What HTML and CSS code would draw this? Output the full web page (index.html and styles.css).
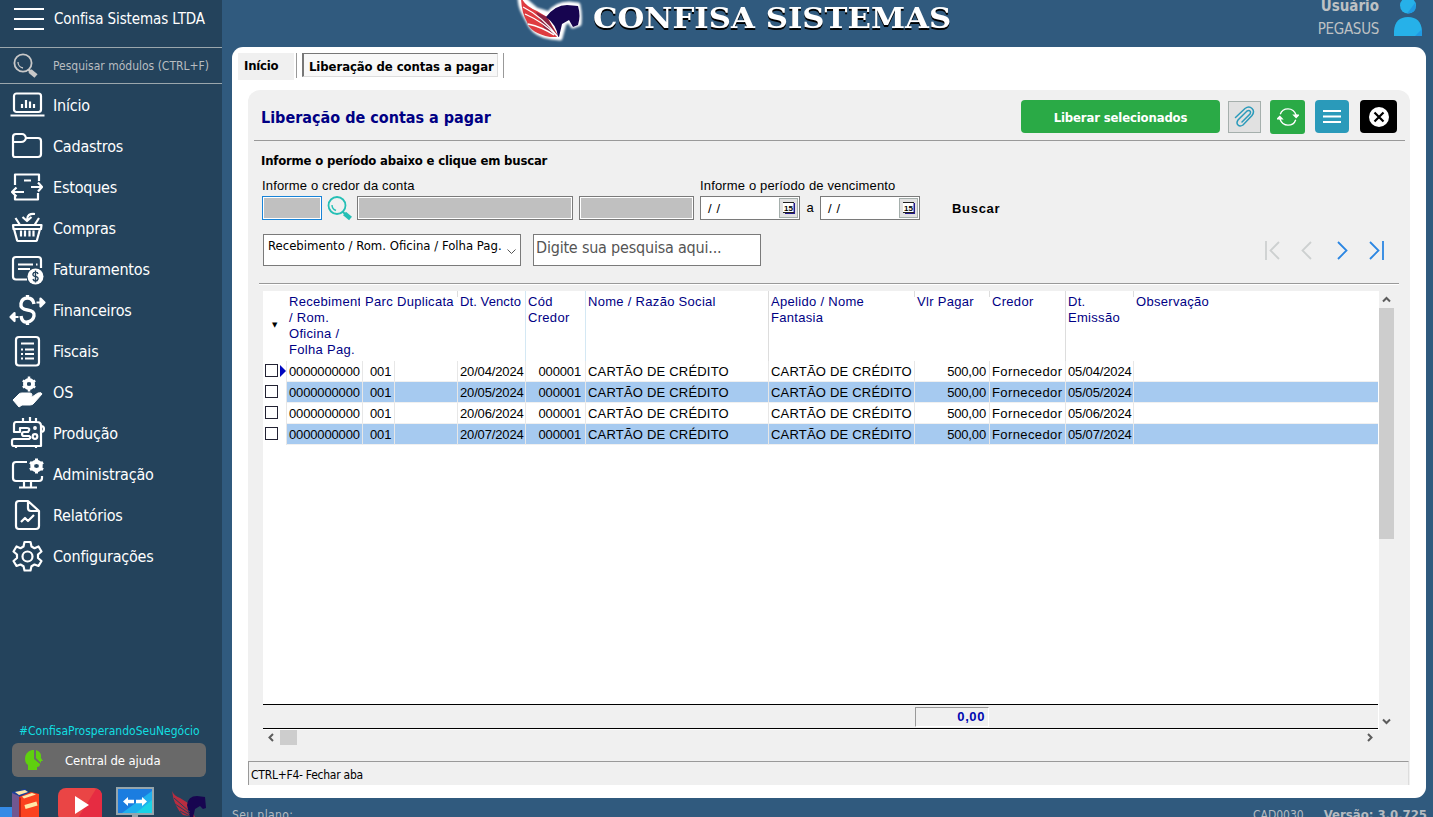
FILE: index.html
```html
<!DOCTYPE html>
<html lang="pt-BR">
<head>
<meta charset="utf-8">
<title>Confisa Sistemas</title>
<link rel="stylesheet" href="styles.css">
</head>
<body>
<div class="app">
  <aside class="sidebar">
    <div class="company">
      <svg class="burger" width="30" height="24" viewBox="0 0 30 24" stroke="#fff" stroke-width="2"><path d="M0 2h30M0 12h30M0 22h30"/></svg>
      <span>Confisa Sistemas LTDA</span>
    </div>
    <div class="search">
      <svg width="26" height="26" viewBox="0 0 26 26" fill="none" stroke="#c8c8c8"><circle cx="10" cy="10" r="8.600" stroke-width="1.800"/><path d="M5 9a6 6 0 0 0 5 6" stroke-width="1.300"/><path d="M15.500 16.500l2 2" stroke-width="2.500"/><path d="M17 18l6 5" stroke-width="4.800"/></svg>
      <span>Pesquisar módulos (CTRL+F)</span>
    </div>
    <nav class="menu">
      <a class="item"><svg viewBox="0 0 34 34"><rect x="4" y="5.500" width="27" height="18.500" rx="2.500"/><path d="M0.500 27.500h34" /><path d="M12 20v-4M16 20v-8M20 20v-6.500M24 20v-4"/></svg><span>Início</span></a>
      <a class="item"><svg viewBox="0 0 34 34"><path d="M3 26V8q0-3 3-3h6q3 0 4 4h12q3 0 3 3v13q0 3-3 3H5q-2 0-2-2zM3 13h8q4 0 5-4"/></svg><span>Cadastros</span></a>
      <a class="item"><svg viewBox="0 0 34 34"><path d="M5 15V4.500h24V11M5 25v4.500h23V23M14 10.500h7M21 17h11M28 12.500l4 4.500-4 4.500M14 22H2M6.500 17.500L2 22l4.500 4.500"/></svg><span>Estoques</span></a>
      <a class="item"><svg viewBox="0 0 34 34"><path d="M3 14h28.500l-.5 4H3.500zM4 18l3 11q0 1 2 1h16q2 0 2-1l3-11M5.500 7l4.500 7M29 7l-4.500 7M11 19.500v6M15 19.500v6M19.500 19.500v6M23.500 19.500v6M25 3q-8-1-8 6M12.500 6l4.500 4 4.500-4"/></svg><span>Compras</span></a>
      <a class="item"><svg viewBox="0 0 34 34"><path d="M17 27.500H6q-3 0-3-3V8q0-3 3-3h22q3 0 3 3v8M8 12.500h15M26 12.500h1.500M8 17h12"/><circle cx="25.500" cy="24.500" r="8" fill="#fff" stroke="none"/><path class="cut" d="M28 22q-.5-2-2.500-2t-2.500 2 2.500 2.500T28 27t-2.500 2-2.500-2M25.500 18.500v12"/></svg><span>Faturamentos</span></a>
      <a class="item"><svg viewBox="0 0 34 34"><path class="heavy" d="M24 11q-1-6-6.500-6T11 10.500t6.500 6.500 6.500 6-6.500 6-6.500-6M17.500 2v3M17.500 29v3"/><path fill="#fff" d="M26.500 9.500H31M30.500 5.500l4 4-4 4zM8.500 24H4M4.500 20L.5 24l4 4z"/></svg><span>Financeiros</span></a>
      <a class="item"><svg viewBox="0 0 34 34"><rect x="6" y="3" width="23" height="28.500" rx="3"/><path d="M11 9.500h13M11 15.500h2M15 15.500h9M11 20h2M15 20h9M11 24.500h2M15 24.500h9"/></svg><span>Fiscais</span></a>
      <a class="item"><svg viewBox="0 0 34 34"><circle cx="19" cy="9" r="4" stroke-width="4"/><path d="M19 1.500v15M12.800 5.500l3 2M12.800 12.500l3-2M25.200 5.500l-3 2M25.200 12.500l-3-2" stroke-width="2.500"/><circle cx="19" cy="9" r="2" fill="#24435c" stroke="none"/><path fill="#fff" stroke-width="1" d="M3 25l6-6q1-1 3-1h8q2 0 2 2t-2 2h-5 7l6-4q4-1 4 1l-8 9q-1 2-4 2h-8l-3 2z"/></svg><span>OS</span></a>
      <a class="item"><svg viewBox="0 0 34 34"><path d="M6 6h21q4 0 4 4v20H4q-2 0-2-2v-3q0-2 2-2h15q3-1.500 0-3h-5q-2 0-2-2t2-2h4q3-4-1-4H10v4H4V9q0-3 2-3zM13 2v4M20 1v5M26 2v4M6 30v2M26 30v2M31 10q3 0 3 3t-3 3"/><circle cx="25" cy="12" r=".8"/><circle cx="25" cy="20.500" r="2.300"/></svg><span>Produção</span></a>
      <a class="item"><svg viewBox="0 0 34 34"><path d="M17 5H6q-3 0-3 3v13q0 3 3 3h23q3 0 3-3v-2M14 24v6M21 24v6M9 30.500h18"/><circle cx="26.500" cy="9" r="4.200" stroke-width="4"/><path d="M26.500 1.500v15M20 5.200l3 2M20 12.800l3-2M33 5.200l-3 2M33 12.800l-3-2" stroke-width="3"/><circle cx="26.500" cy="9" r="2" fill="#24435c" stroke="none"/></svg><span>Administração</span></a>
      <a class="item"><svg viewBox="0 0 34 34"><path d="M18 3H9Q6 3 6 6v22q0 3 3 3h17q3 0 3-3V13zM18 3v7q0 3 3 3h8M11 24l4-4 3 3 6-6"/></svg><span>Relatórios</span></a>
      <a class="item"><svg viewBox="0 0 34 34"><path d="M14.500 3h6l1 4.500 3 1.700 4-1.700 3 5-3.500 3v3.500l3.500 3-3 5-4-1.500-3 1.700-1 4.300h-6l-1-4.300-3-1.700-4 1.500-3-5 3.500-3v-3.500l-3.500-3 3-5 4 1.700 3-1.700z"/><circle cx="17.500" cy="17.500" r="5"/></svg><span>Configurações</span></a>
    </nav>
    <div class="hashtag">#ConfisaProsperandoSeuNegócio</div>
    <div class="help">
      <svg width="20" height="22" viewBox="0 0 20 22"><path fill="#5fd00f" d="M8 1Q1 3 1 10q0 4 3 6v5h9v-3q3 0 3-3l-6-5V1z"/><path fill="#5fd00f" d="M12 1q6 2 5 8l2 3h-2v2l-5-5z"/></svg>
      <span>Central de ajuda</span>
    </div>
    <div class="dock">
      <svg class="corner" width="14" height="11"><path fill="#358be6" d="M0 0h14v11H0z"/></svg>
      <svg class="books" width="28" height="29" viewBox="0 0 28 29"><path fill="#1c3f99" d="M0 4l13-3 4 3v25H0z"/><path fill="#ffe9a8" d="M3 4l10-2 3 2-9 3z"/><path fill="#715791" d="M0 5l7 3v21H0z"/><path fill="#fb421f" d="M7 9l12-5 8 2v23H7z"/><path fill="#ffe9a8" d="M10 8.500L20 5l4 1.500-12 4z"/><path fill="#b82618" d="M7 9l2 1v19H7z"/><path stroke="#ffe9a8" stroke-width="4" d="M13 19l12-3.500"/></svg>
      <svg class="video" width="44" height="30" viewBox="0 0 44 30"><rect width="44" height="34" rx="8" fill="#ea4545"/><path fill="#e62c42" d="M44 8v22H20L38 1q6 1 6 7z"/><path fill="#fff" d="M17 8v18l14-9z"/></svg>
      <svg class="remote" width="38" height="30" viewBox="0 0 38 30"><path fill="#95a5ac" d="M0 0h38v28H22v2h-6v-2H0z"/><path fill="#1b7de0" d="M2 2h34v24H2z"/><path fill="#1fb0ee" d="M36 4v22H6z"/><path fill="#19d3e6" d="M36 13v13H20z"/><path stroke="#fff" stroke-width="3.500" d="M11 14.500h7M20 14.500h7"/><path fill="#fff" d="M12 10v9l-5-4.500zM26 10v9l5-4.500z"/></svg>
      <svg class="pegasus" width="36" height="28" viewBox="0 0 36 28"><path fill="#b82d40" d="M0 0q2 5 8 7l8 5 7 14-12-2Q2 16 0 0z"/><path fill="#170550" d="M15 14q1-9 10-9l8 1 1 11-3 1-3-3-5 3-2 9h-3z"/><path fill="none" stroke="#24435c" d="M2 7l16 14M3 13l15 10M8 20l10 5"/></svg>
    </div>
  </aside>
  <main class="main">
    <header class="banner">
      <svg class="brand" width="76" height="46" viewBox="0 0 76 46"><defs><filter id="soft" x="-20%" y="-20%" width="140%" height="140%"><feGaussianBlur stdDeviation="1.300"/></filter></defs><path filter="url(#soft)" fill="#fff" stroke="#fff" stroke-width="5" stroke-linejoin="round" d="M6-4q0 10 4 17l7 13q6 9 20 11l9 1 4-15 5-3 4 6 6-2q1-10-1-19l-9-1q-13 0-20 10L22 10z"/><path fill="#df3b40" d="M7-4q2 9 16 15l10 6 12 20h-9Q16 33 13 22 7 12 7-4z"/><path fill="#8c2444" d="M22 12l11 5 11 20-14-9z"/><path fill="#170550" d="M32 17Q41 5 53 5l11 1q3 10 0 19l-5 2-4-7-7 4-3 13h-1q-1-12-12-20z"/><path fill="none" stroke="#fff" stroke-width="1.300" d="M9 7q20 10 35 30M11 14q18 8 31 21M14 24q14 3 26 11"/></svg>
      <h1>CONFISA SISTEMAS</h1>
      <div class="user"><b>Usuário</b><span>PEGASUS</span></div>
      <svg class="avatar" width="28" height="36" viewBox="0 0 28 36"><circle cx="14" cy="5.500" r="8" fill="#26b1e9"/><path fill="#209ae3" d="M21 3q3 10-8 10.500z"/><path fill="#26b1e9" d="M0 36v-5q1-14 14-14t14 14v5z"/><path fill="#209ae3" d="M28 29v7h-7z"/></svg>
    </header>
    <section class="window">
      <div class="tabs"><div class="tab home">Início</div><div class="tab current"><span>Liberação de contas a pagar</span></div></div>
      <div class="panel">
        <div class="titlebar">
          <h2>Liberação de contas a pagar</h2>
          <button class="release"><span>Liberar selecionados</span></button>
          <button class="attach"><svg width="22" height="24" viewBox="0 0 22 24" fill="none" stroke="#2a9aba" stroke-width="1.500"><path d="M1.500 12.500L11 3.500q4-3 7 0t0 7L9 20q-3 2-5 0t0-5l9-9q2-1 3 0t0 3l-8 8" stroke-linecap="round"/></svg></button>
          <button class="refresh"><svg width="22" height="20" viewBox="0 0 24 22" fill="none" stroke="#fff" stroke-width="1.500"><path d="M3.500 8q2-6 8.500-6t9 7M20.500 14q-2 6-8.500 6t-9-7"/><path fill="#fff" d="M18.500 9h5L21 11.500zM0.500 13L3 10.500 5.500 13z"/></svg></button>
          <button class="list"><svg width="18" height="13" viewBox="0 0 18 13" stroke="#fff" stroke-width="2"><path d="M0 1h18M0 6.500h18M0 12h18"/></svg></button>
          <button class="close"><svg width="20" height="20" viewBox="0 0 20 20"><circle cx="10" cy="10" r="10" fill="#fff"/><path stroke="#000" stroke-width="2.200" d="M5.500 5.500l9 9M14.500 5.500l-9 9"/></svg></button>
        </div>
        <h3>Informe o período abaixo e clique em buscar</h3>
        <div class="labels"><span class="l1">Informe o credor da conta</span><span class="l2">Informe o período de vencimento</span></div>
        <div class="fields">
          <div class="box code"></div>
          <svg class="find" width="25" height="25" viewBox="0 0 25 25" fill="none" stroke="#25bfb5"><circle cx="9.500" cy="9.500" r="8.500" stroke-width="1.800"/><path d="M4.500 9q0 4 4 5.500" stroke-width="1.400"/><path d="M15 15.500l3 3" stroke-width="2"/><path d="M17 17.500l6 5" stroke-width="4.500"/></svg>
          <div class="box name"></div>
          <div class="box doc"></div>
          <div class="date"><span>/ /</span><i><svg width="12" height="12" viewBox="0 0 12 12"><path fill="#221a8c" d="M2 1h10v11H2z"/><path fill="#fff" d="M0 0h10.500v11H0z"/><path stroke="#222" d="M0 .5h11M0 10.500h11"/><text x="1" y="8.500" class="day">15</text></svg></i></div>
          <span class="to">a</span>
          <div class="date"><span>/ /</span><i><svg width="12" height="12" viewBox="0 0 12 12"><path fill="#221a8c" d="M2 1h10v11H2z"/><path fill="#fff" d="M0 0h10.500v11H0z"/><path stroke="#222" d="M0 .5h11M0 10.500h11"/><text x="1" y="8.500" class="day">15</text></svg></i></div>
          <b class="go">Buscar</b>
        </div>
        <div class="filters">
          <div class="select"><span>Recebimento / Rom. Oficina / Folha Pag.</span><svg width="9" height="6" viewBox="0 0 9 6" fill="none" stroke="#555"><path d="M.5 .5l4 4 4-4"/></svg></div>
          <div class="query">Digite sua pesquisa aqui...</div>
          <svg class="pager" width="120" height="19" viewBox="0 0 120 19" fill="none" stroke-width="1.800"><path stroke="#cdd0d0" d="M1 0v19M14 1L5.500 9.500 14 18M46 1l-8.500 8.500L46 18"/><path stroke="#2b86e2" d="M73 1l8.500 8.500L73 18M105 1l8.500 8.500L105 18M118 0v19"/></svg>
        </div>
        <div class="rule"></div>
        <div class="gridwrap">
          <div class="grid">
            <div class="row head"><div class="mark">▼</div><div class="clip">Recebiment<br>/ Rom.<br>Oficina /<br>Folha Pag.</div><div>Parc</div><div class="tick">Duplicata</div><div class="cyan">Dt. Vencto</div><div class="cyan">Cód<br>Credor</div><div class="line">Nome / Razão Social</div><div class="tick">Apelido / Nome<br>Fantasia</div><div class="tick">Vlr Pagar</div><div class="line">Credor</div><div class="tick">Dt.<br>Emissão</div><div>Observação</div></div>
            <div class="row"><div class="check"><i></i><em></em></div><div class="num">0000000000</div><div class="num mid">001</div><div></div><div class="num">20/04/2024</div><div class="num right">000001</div><div class="caps">CARTÃO DE CRÉDITO</div><div class="caps">CARTÃO DE CRÉDITO</div><div class="num money">500,00</div><div class="kind">Fornecedor</div><div class="num">05/04/2024</div><div></div></div>
            <div class="row blue"><div class="check"><i></i></div><div class="num">0000000000</div><div class="num mid">001</div><div></div><div class="num">20/05/2024</div><div class="num right">000001</div><div class="caps">CARTÃO DE CRÉDITO</div><div class="caps">CARTÃO DE CRÉDITO</div><div class="num money">500,00</div><div class="kind">Fornecedor</div><div class="num">05/05/2024</div><div></div></div>
            <div class="row"><div class="check"><i></i></div><div class="num">0000000000</div><div class="num mid">001</div><div></div><div class="num">20/06/2024</div><div class="num right">000001</div><div class="caps">CARTÃO DE CRÉDITO</div><div class="caps">CARTÃO DE CRÉDITO</div><div class="num money">500,00</div><div class="kind">Fornecedor</div><div class="num">05/06/2024</div><div></div></div>
            <div class="row blue"><div class="check"><i></i></div><div class="num">0000000000</div><div class="num mid">001</div><div></div><div class="num">20/07/2024</div><div class="num right">000001</div><div class="caps">CARTÃO DE CRÉDITO</div><div class="caps">CARTÃO DE CRÉDITO</div><div class="num money">500,00</div><div class="kind">Fornecedor</div><div class="num">05/07/2024</div><div></div></div>
            <div class="totals"><div class="sum">0,00</div></div>
          </div>
          <div class="vscroll"><svg width="15" height="17" viewBox="0 0 15 17" fill="none" stroke="#5c5c5c" stroke-width="2"><path d="M4 10.500L7.500 7l3.500 3.500"/></svg><div class="thumb"></div><svg width="15" height="17" viewBox="0 0 15 17" fill="none" stroke="#5c5c5c" stroke-width="2"><path d="M4 7.500L7.500 11 11 7.500"/></svg></div>
        </div>
        <div class="hscroll"><svg width="17" height="15" viewBox="0 0 17 15" fill="none" stroke="#5c5c5c" stroke-width="2"><path d="M10 4L6.500 7.500 10 11"/></svg><div class="hthumb"></div><svg class="end" width="17" height="15" viewBox="0 0 17 15" fill="none" stroke="#5c5c5c" stroke-width="2"><path d="M6 4l3.500 3.500L6 11"/></svg></div>
        <div class="status">CTRL+F4- Fechar aba</div>
      </div>
    </section>
    <footer class="bottom"><span class="plan">Seu plano:</span><span class="code-id">CAD0030</span><b>Versão: 3.0.725</b></footer>
  </main>
</div>
</body>
</html>
```
FILE: styles.css
```css
*{box-sizing:border-box}
body{margin:0;font-family:"DejaVu Sans Condensed","DejaVu Sans",sans-serif;font-stretch:condensed;color:#000}
h1,h2,h3{margin:0}
svg{display:block;flex:none}
.app{display:flex;width:1433px;height:817px;overflow:hidden;background:#305a7e;white-space:nowrap}
.sidebar{width:222px;height:817px;flex:none;background:#24435c;color:#fff;display:flex;flex-direction:column;overflow:hidden}
.company{height:48px;border-bottom:1px solid #9ba7ad;display:flex;align-items:center;padding:0 0 10px 14px;font-size:15px;letter-spacing:-.1px}
.company span{margin-left:10px}
.search{height:36px;border-bottom:1px solid #9ba7ad;display:flex;align-items:center;padding-left:13px;font-size:12px;color:#b9bdc0}
.search span{margin-left:14px}
.menu{display:flex;flex-direction:column}
.item{height:41px;display:flex;align-items:center;padding-left:10px;font-size:16px;letter-spacing:-.2px}
.item span{padding-top:2px}
.item svg{width:34px;height:34px;margin-right:9px;fill:none;stroke:#fff;stroke-width:2.200;stroke-linejoin:round;overflow:visible}
.item .heavy{stroke-width:3.4}
.item .cut{stroke:#24435c;stroke-width:1.4}
.hashtag{margin-top:147px;height:16px;line-height:16px;padding-left:19px;font-size:12px;color:#12dfe0}
.help{margin:4px 0 0 12px;width:194px;height:34px;border-radius:6px;background:#696969;display:flex;align-items:center;padding-left:12px;font-size:13px;letter-spacing:-.1px}
.help span{margin-left:21px}
.dock{display:flex;height:40px;padding-top:10px}
.corner{margin-top:20px;width:12px}
.books{margin-top:1px}
.video{margin:1px 0 0 18px}
.remote{margin-left:14px}
.pegasus{margin:4px 0 0 18px}
.main{width:1211px;display:flex;flex-direction:column}
.banner{height:47px;display:flex;color:#bec1c3}
.brand{margin-left:292px}
h1{font:bold 28px/37px "DejaVu Serif",serif;font-stretch:normal;color:#fff;text-shadow:0 2px 0 #000;width:362px;margin-left:3px;transform:scaleX(1.1);transform-origin:left top}
.user{margin-left:auto;text-align:right;font-size:15px;display:flex;flex-direction:column;line-height:23px;margin-top:-5px}
.user span{letter-spacing:-.3px}
.avatar{margin:0 11px 0 15px}
.window{margin-left:10px;width:1194px;height:751px;background:#fff;border-radius:11px;overflow:hidden}
.tabs{display:flex;height:43px;padding:6px 0 0 6px;font-weight:bold;font-size:13px;letter-spacing:-.08px}
.home{width:56px;height:27px;background:#f0f0f0;line-height:26px;padding-left:6px;letter-spacing:-.2px}
.current{height:25px;margin:0 0 0 2px;border:solid #999;border-width:0 1px;padding:0 5px}
.current span{display:block;width:196px;height:24px;line-height:25px;border:1px solid;border-color:#777 #ddd #ddd #777;border-left-width:2px;background:#f8f8f8;padding-left:5px}
.panel{margin-left:16px;width:1162px;height:695px;background:#f0f0f0;border-radius:12px 12px 0 0;display:flex;flex-direction:column}
.titlebar{height:51px;margin:0 5px 0 6px;border-bottom:1px solid #999;display:flex;padding:10px 8px 0 7px}
h2{font-size:16px;line-height:35px;color:#000084;width:760px}
button{border:0;padding:0;display:flex;align-items:center;justify-content:center;font-family:inherit;flex:none}
.release{width:199px;height:33px;border-radius:4px;background:#2aaa46;color:#fff;font-weight:bold;font-size:13px;letter-spacing:-.15px;padding-top:1px}
.attach{width:33px;height:32px;margin:1px 0 0 8px;background:#e1e1e1;border:1px solid #a5afac}
.refresh{width:35px;height:34px;margin-left:9px;background:#2aaa46;border-radius:3px}
.list{width:34px;height:33px;margin-left:10px;background:#2a9aba;border-radius:4px}
.close{width:37px;height:33px;margin-left:11px;background:#000;border-radius:4px}
h3{font-size:13px;line-height:20px;height:34px;padding:10px 0 0 13px;letter-spacing:-.19px}
.labels,.fields,.grid{font-family:"Liberation Sans",Arial,sans-serif;font-stretch:normal;font-size:13px}
.labels{display:flex;height:21px;line-height:21px;padding-left:14px;letter-spacing:.15px}
.l1{width:438px}
.fields{display:flex;height:24px;padding-left:14px;line-height:24px}
.box{height:24px;border:1px solid #7a7a7a;background:#c0c0c0;box-shadow:inset 0 0 0 1px #fff}
.code{width:60px;border-color:#1883d7}
.find{margin:0 4px 0 5px;width:26px}
.name{width:216px}
.doc{width:115px;margin:0 6px}
.date{width:100px;border:1px solid #7a7a7a;background:#fff;padding:1px 1px 1px 7px;display:flex;justify-content:space-between;line-height:21px;letter-spacing:.6px}
.date i{width:19px;height:20px;border:1px solid #a5afac;background:#e1e1e1;padding:3px;letter-spacing:0}
.day{font:bold 8px "Liberation Sans",sans-serif}
.to{width:20px;text-align:center}
.go{margin-left:32px;letter-spacing:.7px;line-height:25px}
.filters{display:flex;padding:14px 0 0 15px;height:63px}
.select,.query{height:32px;border:1px solid #7a7a7a;background:#fff}
.select{width:258px;padding:0 4px;display:flex;justify-content:space-between;font-size:13px;line-height:22px}
.select span{width:236px}
.select svg{margin-top:14px}
.query{width:228px;margin-left:12px;padding-left:2px;font-size:16px;line-height:26px;color:#555;letter-spacing:-.2px}
.pager{margin:7px 0 0 504px}
.rule{height:2px;margin:0 11px 0 11px;background:linear-gradient(#999 50%,#fff 50%)}
.gridwrap{display:flex;margin:6px 0 0 15px;height:439px}
.grid{width:1116px;background:#fff;display:flex;flex-direction:column}
.row{display:grid;grid-template-columns:24px 76px 32px 63px 68px 60px 183px 146px 75px 76px 68px 244px;width:1115px;height:21px;flex:none}
.row>div{height:21px;line-height:21px;padding-left:2px;border-right:1px solid #e7e7e7;border-bottom:1px solid #f0f0f0;overflow:hidden}
.row>div:last-child{border-right:0}
.row .check{display:flex;align-items:center;border-bottom:0}
.check i{width:13px;height:13px;border:1px solid #223;margin-top:-2px;flex:none}
.check em{border:6px solid transparent;border-left:6px solid #0008c0;border-right:0;margin:-2px 0 0 2px}
.blue>div:not(:first-child){background:#a6caf0}
.row.head{height:70px;color:#000084}
.head>div{height:70px;line-height:16px;padding-top:3px;border:0!important;letter-spacing:.3px}
.head .clip{border-right:3px solid #fff!important}
.head .mark{font-size:7px;color:#000;padding:26px 0 0 9px;font-family:"DejaVu Sans",sans-serif}
.head .cyan{border-right:1px solid #d4e8f4!important}
.head .line{border-right:1px solid #ddd!important}
.head .tick{background:linear-gradient(#ddd,#ddd) right top/1px 6px no-repeat}
.head .cyan:nth-child(5){letter-spacing:.1px}
.num{letter-spacing:-.15px}
.caps{letter-spacing:.2px}
.kind{letter-spacing:.4px}
.row .mid{padding-left:7px}
.row .right{text-align:right;padding-right:4px}
.row .money{text-align:right;padding-right:3px}
.totals{margin-top:auto;width:1115px;height:25px;border:solid #000;border-width:1px 0;background:#f0f0f0;margin-bottom:1px;flex:none;padding:2px 0 0 652px}
.sum{width:74px;height:20px;border:1px solid;border-color:#999 #fff #fff #999;text-align:right;padding-right:3px;color:#0008b0;font-weight:bold;line-height:18px;letter-spacing:.6px}
.vscroll{width:15px;height:438px}
.thumb{height:231px;margin-bottom:173px;background:#cdcdcd}
.hscroll{display:flex;height:15px;margin:0 31px 0 15px}
.hthumb{width:17px;background:#cdcdcd}
.end{margin-left:auto}
.status{margin-top:auto;height:24px;border:1px solid #999;border-right-color:#ddd;border-bottom:0;width:1161px;padding-left:2px;font-size:12px;line-height:26px;letter-spacing:-.25px}
.bottom{height:19px;display:flex;padding:7px 6px 0 10px;font-size:12px;line-height:20px;color:#b5bbc0}
.plan{letter-spacing:.4px}
.code-id{margin-left:auto;margin-right:20px}
.bottom b{font-size:13px}
```
